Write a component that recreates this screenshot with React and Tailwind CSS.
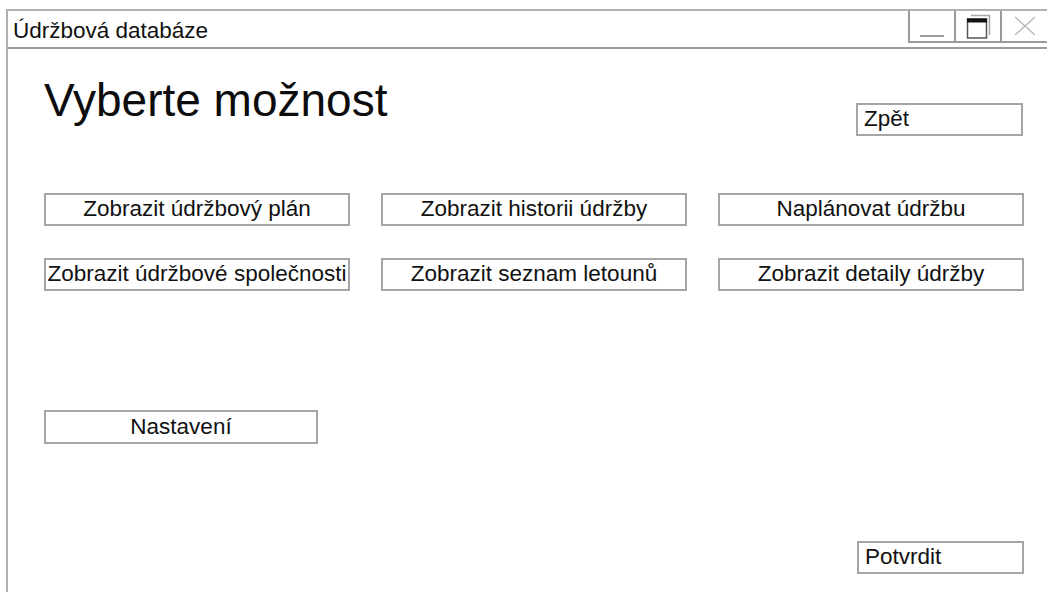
import React from "react";

const font = { fontFamily: '"Liberation Sans", Arial, sans-serif' };

const actions = [
  "Zobrazit údržbový plán",
  "Zobrazit historii údržby",
  "Naplánovat údržbu",
  "Zobrazit údržbové společnosti",
  "Zobrazit seznam letounů",
  "Zobrazit detaily údržby",
];

function WindowControls() {
  return (
    <div className="flex h-[32px] self-start border-b-2 border-l-2 border-[#9a9a9a]">
      <div className="flex w-[46px] items-end justify-center border-r-2 border-[#9a9a9a] pb-[4px]">
        <div className="h-[2px] w-[24px] bg-[#9c9c9c]" />
      </div>
      <div className="flex w-[46px] items-center justify-center border-r-2 border-[#9a9a9a]">
        <svg width="26" height="25" viewBox="0 0 26 25">
          <path d="M6 1.5 H24.5 V21" fill="none" stroke="#a8a8a8" strokeWidth="1.5" />
          <rect x="2.5" y="5" width="19" height="19" fill="white" stroke="#555" strokeWidth="1.5" />
          <rect x="2" y="4.5" width="20" height="4" fill="#111" />
        </svg>
      </div>
      <div className="flex w-[45px] items-center justify-center">
        <svg width="24" height="20" viewBox="0 0 24 20">
          <path d="M2 1 L22 19 M22 1 L2 19" stroke="#b4b4b4" strokeWidth="1.2" />
        </svg>
      </div>
    </div>
  );
}

function Box({ children, className = "" }) {
  return (
    <button
      className={`flex items-center border-2 border-[#a5a5a5] bg-white text-[22.5px] leading-none text-[#111] whitespace-nowrap ${className}`}
      style={font}
    >
      {children}
    </button>
  );
}

export default function App() {
  return (
    <div className="h-[592px] w-[1047px] overflow-hidden bg-white pl-[6px] pt-[9px]" style={font}>
      <div className="flex h-full flex-col border-l-2 border-t-2 border-[#b0b0b0]">
        <div className="flex h-[38px] items-start justify-between border-b-2 border-[#9a9a9a]">
          <span className="pl-[5px] pt-[9px] text-[22.5px] leading-none text-[#111]">Údržbová databáze</span>
          <WindowControls />
        </div>

        <div className="flex flex-col pl-[36px]">
          <div className="flex w-[980px] items-start justify-between pt-[28px]">
            <h1 className="text-[46px] font-normal leading-[46px] text-[#0c0c0c]">Vyberte možnost</h1>
            <Box className="mr-[1px] mt-[26px] h-[33px] w-[167px] pl-[6px]">Zpět</Box>
          </div>

          <div className="mt-[57px] grid w-[980px] grid-cols-3 gap-x-[31px] gap-y-[32px]">
            {actions.map((label) => (
              <Box key={label} className="h-[33px] justify-center">
                {label}
              </Box>
            ))}
          </div>

          <Box className="mt-[119px] h-[34px] w-[274px] justify-center">Nastavení</Box>

          <Box className="ml-[813px] mt-[97px] h-[33px] w-[167px] pl-[6px]">Potvrdit</Box>
        </div>
      </div>
    </div>
  );
}
